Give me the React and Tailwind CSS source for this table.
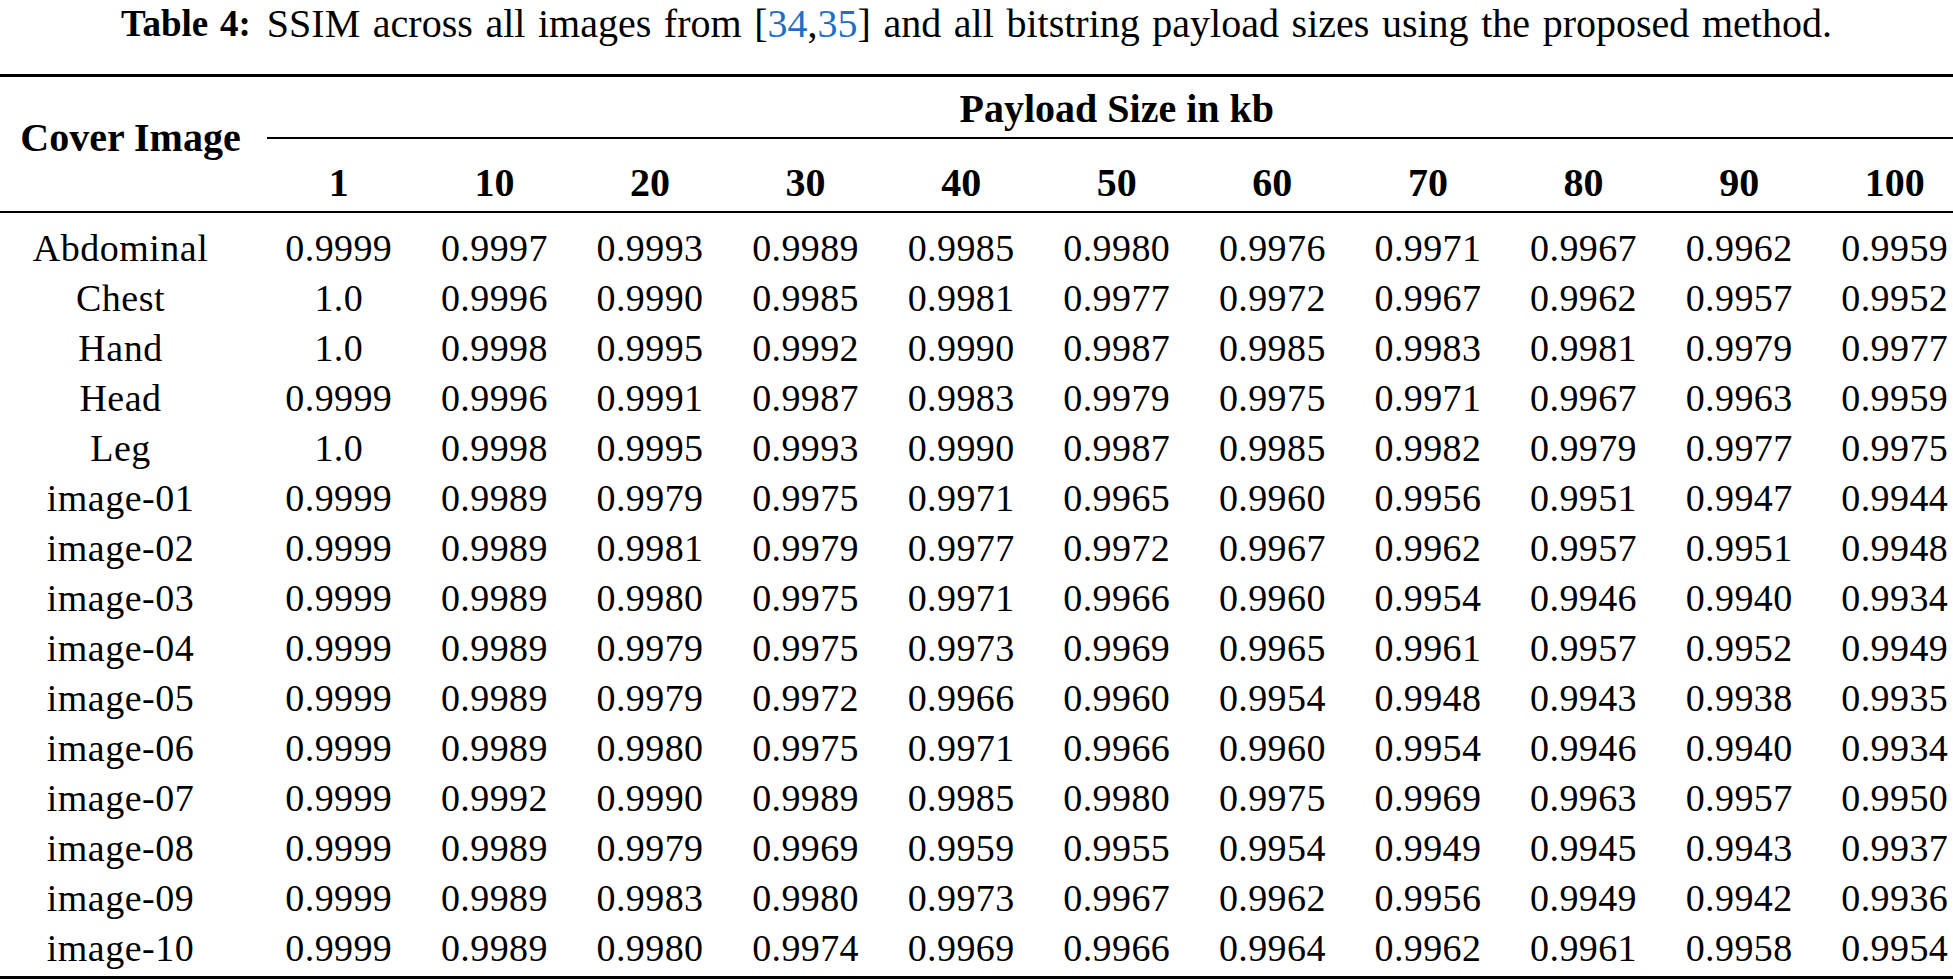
import React from "react";

const sizes = [1, 10, 20, 30, 40, 50, 60, 70, 80, 90, 100];

const rows = [
  ["Abdominal", "0.9999", "0.9997", "0.9993", "0.9989", "0.9985", "0.9980", "0.9976", "0.9971", "0.9967", "0.9962", "0.9959"],
  ["Chest", "1.0", "0.9996", "0.9990", "0.9985", "0.9981", "0.9977", "0.9972", "0.9967", "0.9962", "0.9957", "0.9952"],
  ["Hand", "1.0", "0.9998", "0.9995", "0.9992", "0.9990", "0.9987", "0.9985", "0.9983", "0.9981", "0.9979", "0.9977"],
  ["Head", "0.9999", "0.9996", "0.9991", "0.9987", "0.9983", "0.9979", "0.9975", "0.9971", "0.9967", "0.9963", "0.9959"],
  ["Leg", "1.0", "0.9998", "0.9995", "0.9993", "0.9990", "0.9987", "0.9985", "0.9982", "0.9979", "0.9977", "0.9975"],
  ["image-01", "0.9999", "0.9989", "0.9979", "0.9975", "0.9971", "0.9965", "0.9960", "0.9956", "0.9951", "0.9947", "0.9944"],
  ["image-02", "0.9999", "0.9989", "0.9981", "0.9979", "0.9977", "0.9972", "0.9967", "0.9962", "0.9957", "0.9951", "0.9948"],
  ["image-03", "0.9999", "0.9989", "0.9980", "0.9975", "0.9971", "0.9966", "0.9960", "0.9954", "0.9946", "0.9940", "0.9934"],
  ["image-04", "0.9999", "0.9989", "0.9979", "0.9975", "0.9973", "0.9969", "0.9965", "0.9961", "0.9957", "0.9952", "0.9949"],
  ["image-05", "0.9999", "0.9989", "0.9979", "0.9972", "0.9966", "0.9960", "0.9954", "0.9948", "0.9943", "0.9938", "0.9935"],
  ["image-06", "0.9999", "0.9989", "0.9980", "0.9975", "0.9971", "0.9966", "0.9960", "0.9954", "0.9946", "0.9940", "0.9934"],
  ["image-07", "0.9999", "0.9992", "0.9990", "0.9989", "0.9985", "0.9980", "0.9975", "0.9969", "0.9963", "0.9957", "0.9950"],
  ["image-08", "0.9999", "0.9989", "0.9979", "0.9969", "0.9959", "0.9955", "0.9954", "0.9949", "0.9945", "0.9943", "0.9937"],
  ["image-09", "0.9999", "0.9989", "0.9983", "0.9980", "0.9973", "0.9967", "0.9962", "0.9956", "0.9949", "0.9942", "0.9936"],
  ["image-10", "0.9999", "0.9989", "0.9980", "0.9974", "0.9969", "0.9966", "0.9964", "0.9962", "0.9961", "0.9958", "0.9954"],
];

const cols = "grid grid-cols-[261px_repeat(11,155.6px)]";

export default function App() {
  return (
    <div className="w-[1953px] h-[980px] overflow-hidden bg-white text-black font-['Liberation_Serif',serif]">
      <div className="w-[1973px]">
        {/* caption */}
        <div className="w-[1953px] h-[48px] flex items-center justify-center text-[40px] leading-[48px] whitespace-nowrap [word-spacing:2.6px]">
          <span className="font-bold text-[37px]">Table 4:</span>
          <span className="ml-[16px]">
            SSIM across all images from [<span className="text-[#1f6fc5]">34</span>,
            <span className="text-[#1f6fc5]">35</span>] and all bitstring payload sizes using the proposed method.
          </span>
        </div>

        <div className="mt-[26px] h-[3px] bg-black" />

        {/* header */}
        <div className={`${cols} font-bold text-[40px]`}>
          <div className="row-span-3 flex items-center justify-center pb-[12px]">Cover Image</div>
          <div className="col-span-11 h-[60px] flex items-center justify-center pt-[4px]">Payload Size in kb</div>
          <div className="col-span-11 ml-[6px] h-[2px] bg-black" />
          {sizes.map((s) => (
            <div key={s} className="h-[72px] flex items-center justify-center pt-[16px]">
              {s}
            </div>
          ))}
        </div>

        <div className="h-[2px] bg-black" />

        {/* body */}
        <div className="pt-[7px] text-[38px]">
          {rows.map((r) => (
            <div key={r[0]} className={`${cols} h-[50px]`}>
              {r.map((v, i) => (
                <div
                  key={i}
                  className={`flex items-center justify-center ${i === 0 ? "pr-[20px] tracking-[0.5px]" : "tracking-[0.4px]"}`}
                >
                  {v}
                </div>
              ))}
            </div>
          ))}
        </div>

        <div className="mt-[6px] h-[3px] bg-black" />
      </div>
    </div>
  );
}
